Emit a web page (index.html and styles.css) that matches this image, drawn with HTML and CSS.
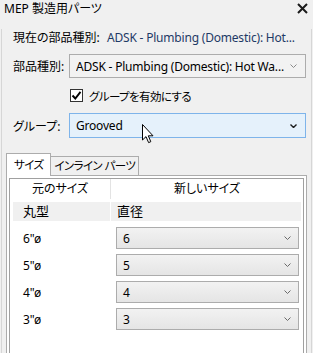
FILE: index.html
```html
<!DOCTYPE html>
<html lang="ja">
<head>
    <meta charset="UTF-8">
    <meta name="viewport" content="width=device-width, initial-scale=1.0">
    <title>MEP 製造用パーツ</title>
    <link rel="stylesheet" href="styles.css">
</head>
<body>
    <div class="window">
        <div class="titlebar">
            <span class="title">MEP 製造用パーツ</span>
            <svg class="close" width="11" height="11" viewBox="0 0 11 11">
                <path d="M1 1 L10 10 M10 1 L1 10" stroke="#1a1a1a" stroke-width="2" fill="none"/>
            </svg>
        </div>
        <div class="content">
            <div class="row current">
                <span class="label-wide">現在の部品種別:</span>
                <span class="value">ADSK - Plumbing (Domestic): Hot...</span>
            </div>
            <div class="row field">
                <span class="label">部品種別:</span>
                <div class="select">
                    <span class="select-text">ADSK - Plumbing (Domestic): Hot Wa...</span>
                    <svg class="chev light" width="7" height="4" viewBox="0 0 7 4"><path d="M0.5 0.5 L3.5 3.5 L6.5 0.5" stroke="#8a8a8a" fill="none"/></svg>
                </div>
            </div>
            <div class="row check-row">
                <span class="checkbox">
                    <svg width="11" height="11" viewBox="0 0 11 11"><path d="M1.5 5.5 L4.3 8.5 L9.5 1.8" stroke="#000" stroke-width="1.9" fill="none"/></svg>
                </span>
                <span class="check-label kana">グループを有効にする</span>
            </div>
            <div class="row field group">
                <span class="label">グループ:</span>
                <div class="select hover">
                    <span class="select-text">Grooved</span>
                    <svg class="chev" width="7" height="4" viewBox="0 0 7 4"><path d="M0.5 0.5 L3.5 3.5 L6.5 0.5" stroke="#1a1a1a" stroke-width="1.4" fill="none"/></svg>
                </div>
            </div>
            <div class="tabs">
                <div class="tab active kana">サイズ</div>
                <div class="tab kana">インライン パーツ</div>
            </div>
            <div class="panel">
                <div class="grid">
                    <div class="grid-head">
                        <div class="head-cell first">元のサイズ</div>
                        <div class="head-cell">新しいサイズ</div>
                    </div>
                    <div class="grid-body">
                        <div class="sub">
                            <div class="sub-cell first">丸型</div>
                            <div class="sub-cell second">直径</div>
                        </div>
                        <div class="size-rows">
                            <div class="size-row">
                                <span class="size-label">6"ø</span>
                                <div class="small-select">
                                    <span>6</span>
                                    <svg class="chev" width="7" height="4" viewBox="0 0 7 4"><path d="M0.5 0.5 L3.5 3.5 L6.5 0.5" stroke="#6a6a6a" fill="none"/></svg>
                                </div>
                            </div>
                            <div class="size-row">
                                <span class="size-label">5"ø</span>
                                <div class="small-select">
                                    <span>5</span>
                                    <svg class="chev" width="7" height="4" viewBox="0 0 7 4"><path d="M0.5 0.5 L3.5 3.5 L6.5 0.5" stroke="#6a6a6a" fill="none"/></svg>
                                </div>
                            </div>
                            <div class="size-row">
                                <span class="size-label">4"ø</span>
                                <div class="small-select">
                                    <span>4</span>
                                    <svg class="chev" width="7" height="4" viewBox="0 0 7 4"><path d="M0.5 0.5 L3.5 3.5 L6.5 0.5" stroke="#6a6a6a" fill="none"/></svg>
                                </div>
                            </div>
                            <div class="size-row">
                                <span class="size-label">3"ø</span>
                                <div class="small-select">
                                    <span>3</span>
                                    <svg class="chev" width="7" height="4" viewBox="0 0 7 4"><path d="M0.5 0.5 L3.5 3.5 L6.5 0.5" stroke="#6a6a6a" fill="none"/></svg>
                                </div>
                            </div>
                        </div>
                    </div>
                </div>
            </div>
        </div>
        <svg class="cursor" width="13" height="20" viewBox="0 0 13 20">
            <path d="M0.5 0.5 L0.5 16 L4 12.6 L6.6 18.6 L8.8 17.7 L6.3 11.8 L11 11.8 Z" fill="#fff" stroke="#000" stroke-width="1" stroke-linejoin="miter"/>
        </svg>
    </div>
</body>
</html>
```

FILE: styles.css
```css
*{
    margin: 0;
    padding: 0;
    box-sizing: border-box;
}
html, body{
    width: 313px;
    height: 353px;
    overflow: hidden;
    background-color: #f0f0f0;
}
body{
    font-family: "Noto Sans", "Noto Sans CJK JP", sans-serif;
    font-size: 12px;
    font-feature-settings: "palt";
    color: #000;
}
.kana{
    font-size: 11.5px;
    letter-spacing: -0.6px;
}
.window{
    position: relative;
    height: 353px;
}
.titlebar{
    height: 17px;
    display: flex;
    align-items: center;
    justify-content: space-between;
    padding: 0 5px 0 4px;
}
.title{
    line-height: 16px;
}
.content{
    margin: 0 1px;
    border-left: 1px solid #d6d6d6;
    border-right: 1px solid #d6d6d6;
    padding: 0 4px;
    height: 336px;
}
.row{
    display: flex;
    align-items: center;
    padding: 0 1px 0 7px;
}
.current{
    margin-top: 12px;
    height: 16px;
}
.label-wide{
    width: 94px;
}
.value{
    color: #1e3a66;
    white-space: nowrap;
    letter-spacing: -0.2px;
}
.field{
    margin-top: 9px;
}
.label{
    width: 56px;
    flex-shrink: 0;
}
.select{
    flex: 1;
    height: 24px;
    display: flex;
    align-items: center;
    justify-content: space-between;
    padding: 0 8px 0 6px;
    border: 1px solid #acacac;
    background-color: #f2f2f2;
}
.select-text{
    white-space: nowrap;
    overflow: hidden;
    letter-spacing: -0.2px;
}
.group{
    margin-top: 11px;
}
.group .select{
    height: 25px;
}
.hover{
    background-color: #e5f1fb;
    border-color: #7eb4ea;
}
.check-row{
    margin-top: 11px;
    height: 13px;
    padding-left: 64px;
}
.checkbox{
    width: 13px;
    height: 13px;
    border: 1px solid #333;
    background-color: #fff;
    display: flex;
    align-items: center;
    justify-content: center;
}
.check-label{
    margin-left: 6px;
}
.tabs{
    margin-top: 15px;
    height: 22px;
    display: flex;
    align-items: flex-start;
}
.tab{
    height: 19px;
    margin-top: 3px;
    margin-left: -1px;
    padding: 0 3px;
    border: 1px solid #acacac;
    border-bottom: none;
    background-color: #f0f0f0;
    line-height: 18px;
    white-space: nowrap;
}
.tab.active{
    position: relative;
    height: 23px;
    margin-top: 0;
    margin-left: 0;
    padding: 0 7px;
    background-color: #fff;
    line-height: 21px;
}
.panel{
    border: 1px solid #acacac;
    background-color: #fff;
    padding: 2px;
    height: 200px;
}
.grid{
    border: 1px solid #a0a0a0;
    height: 190px;
}
.grid-head{
    display: grid;
    grid-template-columns: 101px 1fr;
    height: 20px;
}
.head-cell{
    text-align: center;
    line-height: 20px;
}
.head-cell.first{
    border-right: 1px solid #e3e3e3;
}
.grid-body{
    padding: 3px 2px 0 3px;
}
.sub{
    display: grid;
    grid-template-columns: 97px 1fr;
    column-gap: 1px;
    height: 19px;
}
.sub-cell{
    background-color: #f0f0f0;
    line-height: 19px;
    font-size: 13px;
}
.sub-cell.first{
    padding-left: 10px;
}
.sub-cell.second{
    padding-left: 6px;
}
.size-rows{
    margin-top: 6px;
    display: flex;
    flex-direction: column;
    gap: 5px;
}
.size-row{
    display: grid;
    grid-template-columns: 98px 1fr;
    align-items: center;
    height: 22px;
}
.size-label{
    padding-left: 10px;
}
.small-select{
    margin: 0 2px 0 5px;
    height: 22px;
    border: 1px solid #acacac;
    background: linear-gradient(#f2f2f2, #e5e5e5);
    display: flex;
    align-items: center;
    justify-content: space-between;
    padding: 0 7px 0 6px;
}
.cursor{
    position: absolute;
    left: 142px;
    top: 124px;
}
```
